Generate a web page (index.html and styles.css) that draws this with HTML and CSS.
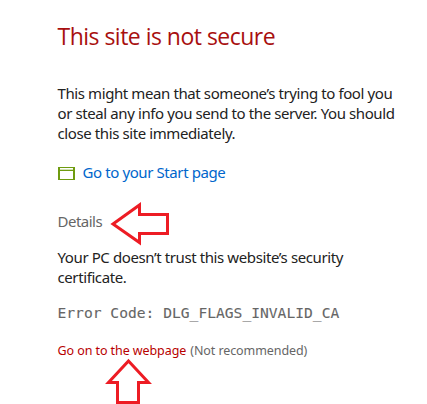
FILE: index.html
```
<!DOCTYPE html>
<html lang="en">
<head>
<meta charset="utf-8">
<title>This site is not secure</title>
<link rel="stylesheet" href="styles.css">
</head>
<body>
<main class="page">
<h1 class="title">This site is not secure</h1>
<p class="message">This might mean that someone’s trying to fool you<br>or steal any info you send to the server. You should<br>close this site immediately.</p>
<a class="start"><svg class="start-icon" width="17" height="13" viewBox="0 0 17 13" shape-rendering="crispEdges"><path fill="#6f9b10" d="M0 0h17v13H0z"/><path fill="#fff" d="M2 1h13v2H2zM2 4h13v8H2z"/><path fill="#d3e2b4" d="M2 2h13v1H2z"/></svg><span>Go to your Start page</span></a>
<div class="details">Details</div>
<p class="reason">Your PC doesn’t trust this website’s security<br>certificate.</p>
<code class="code">Error Code: DLG_FLAGS_INVALID_CA</code>
<p class="proceed"><a class="go">Go on to the webpage</a><span class="note">(Not recommended)</span></p>
</main>
<svg class="arrow arrow-left" width="60" height="44" viewBox="110 202 60 44"><path d="M113 224 139.500 205V214.500H167.500V233.500H139.500V242.500Z"/></svg>
<svg class="arrow arrow-up" width="48" height="47" viewBox="105 357 48 47"><path d="M128.500 361 148.500 382.500H138.500V402.500H117.500V382.500H108.500Z"/></svg>
</body>
</html>
```
FILE: styles.css
```
body { margin: 0; background: #fff; font-family: "Noto Sans", "Open Sans", sans-serif; color: #222; position: relative; height: 404px; overflow: hidden; }
.page { padding: 20px 0 0 57.500px; display: flex; flex-direction: column; align-items: flex-start; white-space: nowrap; }
.title { margin: 0; font-family: "Open Sans", sans-serif; font-size: 23px; line-height: 32px; font-weight: 400; color: #a80f0f; letter-spacing: -0.52px; }
.message { margin: 31px 0 0; font-size: 15px; line-height: 20px; letter-spacing: -0.4px; }
.start { display: flex; align-items: center; gap: 8px; margin-top: 19px; height: 20px; font-size: 15px; line-height: 20px; letter-spacing: -0.4px; color: #0066cc; }
.start-icon { position: relative; top: 1px; left: 0.500px; }
.details { margin-top: 29px; font-size: 15px; line-height: 20px; letter-spacing: -0.5px; color: #666; }
.reason { margin: 16px 0 0; font-size: 15px; line-height: 20px; letter-spacing: -0.4px; }
.code { margin-top: 16px; font-family: "DejaVu Sans Mono", monospace; font-size: 14.630px; line-height: 20px; color: #666; -webkit-text-stroke: 0.1px #666; }
.proceed { margin: 18px 0 0; display: flex; gap: 4px; font-size: 12.500px; line-height: 20px; letter-spacing: -0.08px; color: #666; }
.go { color: #b80000; }
.arrow { position: absolute; fill: #fff; stroke: #ed1c24; stroke-width: 3; }
.arrow-left { left: 110px; top: 202px; }
.arrow-up { left: 105px; top: 357px; }
```
